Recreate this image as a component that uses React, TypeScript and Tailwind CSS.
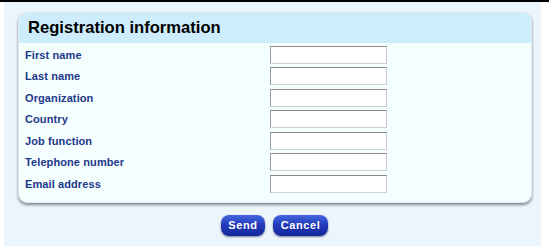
import React from 'react';

const fields = [
  'First name',
  'Last name',
  'Organization',
  'Country',
  'Job function',
  'Telephone number',
  'Email address',
];

const font = { fontFamily: '"Liberation Sans", Arial, sans-serif' };

export default function App() {
  return (
    <div className="w-[549px] h-[252px] bg-white overflow-hidden" style={font}>
      <div className="h-[2px] bg-black" />
      <div className="ml-[4px] w-[537px] h-[244px] bg-[#ecf4fc] pt-[10px] flex flex-col">
        <div className="ml-[14px] w-[514px] h-[191px] rounded-[9px] bg-[#f4feff] border border-[#dce9f4] shadow-[0_2px_3px_rgba(0,0,0,0.45)] overflow-hidden">
          <div className="h-[30px] bg-[#cdedfc] pl-[9px] flex items-center">
            <h1 className="text-[16.6px] font-bold text-black leading-none pt-[1px]">Registration information</h1>
          </div>
          <div className="pt-[1px]">
            {fields.map(f => (
              <div key={f} className="h-[21.5px] flex items-center">
                <label className="w-[251px] pl-[6px] text-[11px] font-bold text-[#1c3888] tracking-[0.1px]">{f}</label>
                <input
                  type="text"
                  className="w-[117px] h-[18px] bg-white border border-t-[#8a8a8a] border-l-[#9a9a9a] border-r-[#c8c8c8] border-b-[#d0d0d0] outline-none"
                />
              </div>
            ))}
          </div>
        </div>
        <div className="flex justify-center gap-[8px] mt-[12px] ml-[4px]">
          <button className="w-[44px] h-[21px] rounded-[8px] bg-gradient-to-b from-[#4466e0] via-[#2238b8] to-[#142898] text-white text-[11px] font-bold tracking-[0.6px] shadow-[0_1px_2px_rgba(0,0,40,0.5)]">
            Send
          </button>
          <button className="w-[55px] h-[21px] rounded-[8px] bg-gradient-to-b from-[#4466e0] via-[#2238b8] to-[#142898] text-white text-[11px] font-bold tracking-[0.6px] shadow-[0_1px_2px_rgba(0,0,40,0.5)]">
            Cancel
          </button>
        </div>
      </div>
    </div>
  );
}
